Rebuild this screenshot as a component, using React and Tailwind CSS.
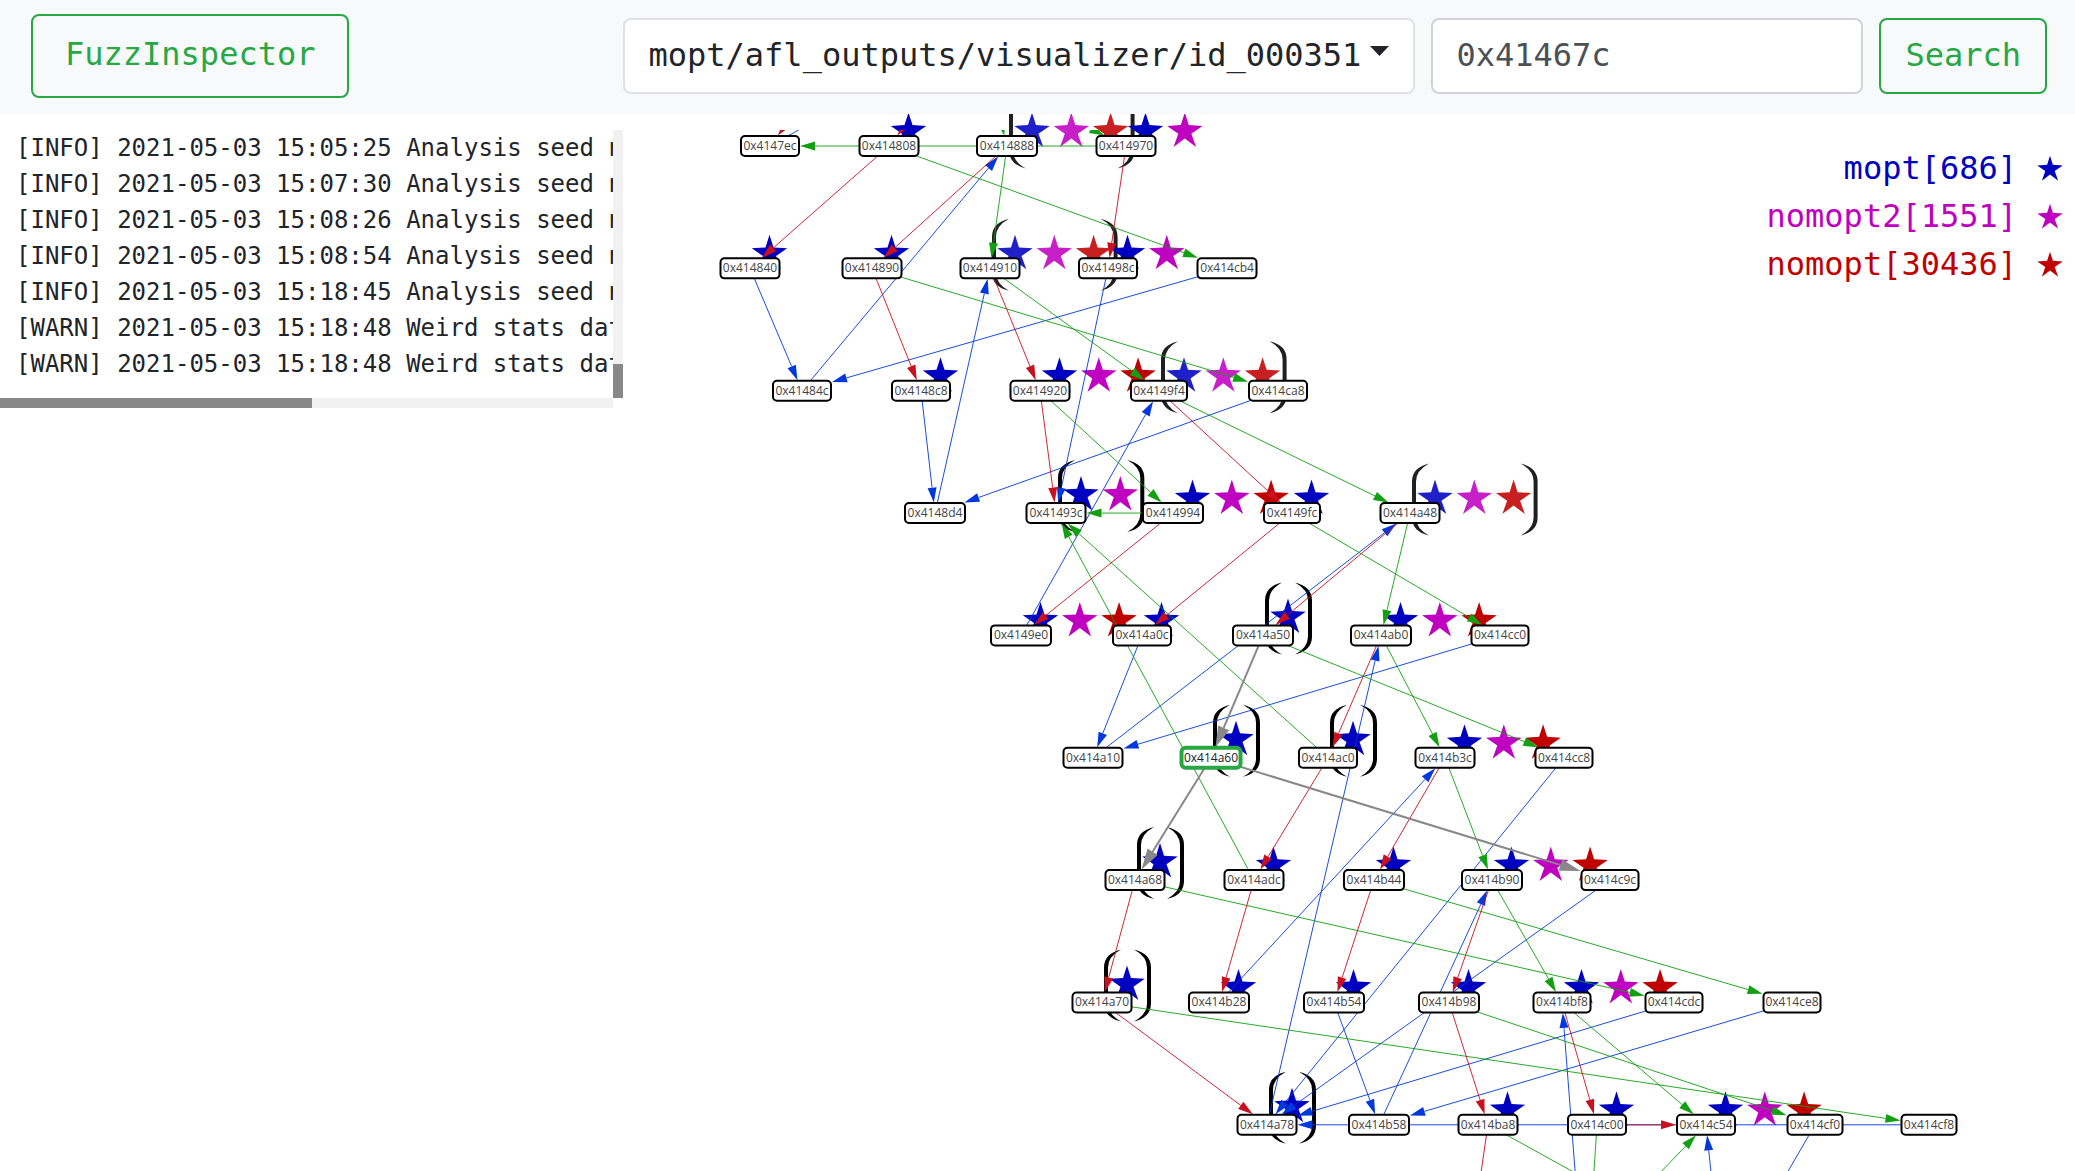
import React from "react";

const BLUE = "#0000c0";
const MAGENTA = "#c000c0";
const RED = "#c00000";
const STAR_COLORS = [BLUE, MAGENTA, RED];

const EDGE_COLORS = { r: "#c8101e", g: "#12a012", b: "#0038dc", k: "#888888" };

const ROW_TOP = 32;
const ROW_PITCH = 122.35;

// id, row, centre x, width, stars, bracket ("solid" | "faint" | none)
const NODES = [
  ["7ec", 0, 770, 60], ["808", 0, 889, 61, 1], ["888", 0, 1007, 62, 3, "faint"], ["970", 0, 1126, 61, 2],
  ["840", 1, 750, 61, 1], ["890", 1, 872, 61, 1], ["910", 1, 990, 61, 3, "faint"], ["98c", 1, 1108, 60, 2], ["cb4", 1, 1227, 61],
  ["84c", 2, 802, 60], ["8c8", 2, 921, 60, 1], ["920", 2, 1040, 61, 3], ["9f4", 2, 1159, 58, 3, "faint"], ["ca8", 2, 1278, 60],
  ["8d4", 3, 935, 62], ["93c", 3, 1056, 61, 2, "solid"], ["994", 3, 1173, 62, 3], ["9fc", 3, 1292, 58, 1], ["a48", 3, 1410, 61, 3, "faint"],
  ["9e0", 4, 1021, 62, 3], ["a0c", 4, 1142, 60, 1], ["a50", 4, 1263, 62, 1, "solid"], ["ab0", 4, 1381, 62, 3], ["cc0", 4, 1500, 59],
  ["a10", 5, 1093, 61], ["a60", 5, 1211, 61, 1, "solid"], ["ac0", 5, 1328, 60, 1, "solid"], ["b3c", 5, 1445, 61, 3], ["cc8", 5, 1564, 59],
  ["a68", 6, 1135, 61, 1, "solid"], ["adc", 6, 1254, 61, 1], ["b44", 6, 1374, 62, 1], ["b90", 6, 1492, 62, 3], ["c9c", 6, 1610, 59],
  ["a70", 7, 1102, 61, 1, "solid"], ["b28", 7, 1219, 62, 1], ["b54", 7, 1334, 62, 1], ["b98", 7, 1449, 62, 1], ["bf8", 7, 1562, 59, 3], ["cdc", 7, 1674, 59], ["ce8", 7, 1792, 59],
  ["a78", 8, 1267, 61, 1, "solid"], ["b58", 8, 1379, 62], ["ba8", 8, 1488, 61, 1], ["c00", 8, 1597, 60, 1], ["c54", 8, 1706, 60, 3], ["cf0", 8, 1815, 57], ["cf8", 8, 1929, 57],
].map(([id, row, x, w, stars = 0, bracket]) => ({ id, x, y: ROW_TOP + row * ROW_PITCH, w, stars, bracket }));

// Neighbours that lie above or below the visible part of the graph.
const OUTSIDE = [
  ["t1", -1, 862], ["t2", -1, 988], ["t3", -1, 986], ["t4", -1, 976], ["t5", -1, 874],
  ["u1", 9, 1589], ["u2", 9, 1470], ["u3", 9, 1710], ["u4", 9, 1581], ["u5", 9, 1719], ["u6", 9, 1744],
].map(([id, row, x]) => ({ id, x, y: ROW_TOP + row * ROW_PITCH, w: 60 }));

const BY_ID = Object.fromEntries([...NODES, ...OUTSIDE].map((n) => [n.id, n]));

const EDGES = `
b 84c 888|b 840 84c|b cb4 84c|b 8c8 8d4|b 8d4 910|b ca8 8d4|b 98c 93c|b 9e0 9f4|b a10 a48|b a0c a10|b cc0 a10
b a78 ab0|b b28 b3c|b cc8 a78|b c9c a78|b cdc a78|b b54 b58|b b58 b90|b ce8 b58|b cf8 a78|b 7ec t2|b u4 bf8|b u5 c54|b cf0 u6
g 970 7ec|g 808 cb4|g 888 910|g 890 ca8|g 910 9f4|g 9f4 a48|g 920 994|g 994 93c|g a48 ab0|g 9fc cc0|g ac0 93c|g adc 93c
g ab0 b3c|g b3c b90|g b90 bf8|g a50 cc8|g a68 cdc|g b44 ce8|g a70 cf8|g b98 cf0|g bf8 c54|g u1 c54|g ba8 u3|g c00 u1|g t4 888|g t5 970
r 808 840|r 888 890|r 970 98c|r 890 8c8|r 910 920|r 920 93c|r 9f4 9fc|r 994 9e0|r 9fc a0c|r a48 a50|r ab0 ac0|r ac0 adc|r b3c b44
r adc b28|r b44 b54|r b90 b98|r a68 a70|r a70 a78|r b98 ba8|r bf8 c00|r c00 c54|r ba8 u2|r t1 7ec|r t3 808
k a50 a60|k a60 a68|k a60 c9c`
  .trim()
  .split(/[|\n]/)
  .map((e) => e.split(" "));

function Edge({ kind, from, to }) {
  const a = BY_ID[from];
  const b = BY_ID[to];
  const dx = b.x - a.x;
  const dy = b.y - a.y;
  const len = Math.hypot(dx, dy);
  const ux = dx / len;
  const uy = dy / len;
  const t = Math.min((b.w / 2) / Math.abs(ux || 1e-6), 10.5 / Math.abs(uy || 1e-6));
  const tx = b.x - ux * t;
  const ty = b.y - uy * t;
  const thick = kind === "k";
  const al = thick ? 21 : 15;
  const aw = thick ? 6 : 4.5;
  const bx = tx - ux * al;
  const by = ty - uy * al;
  const color = EDGE_COLORS[kind];
  return (
    <g fill={color} stroke="none">
      <line x1={a.x} y1={a.y} x2={bx} y2={by} stroke={color} strokeWidth={thick ? 2 : 1} strokeOpacity={thick ? 1 : 0.9} />
      <polygon points={`${tx},${ty} ${bx - uy * aw},${by + ux * aw} ${bx + uy * aw},${by - ux * aw}`} />
    </g>
  );
}

const STAR_PATH = "M0 -18 L4 -5.400 L17.700 -4.600 L6.500 3.200 L11.300 16.500 L0 8 L-11.300 16.500 L-6.500 3.200 L-17.700 -4.600 L-4 -5.400 Z";
const OPEN_BRACKET = "M17 -36 Q0 -32 0 -18 L0 18 Q0 32 17 36 Q4 29 4 18 L4 -18 Q4 -29 17 -36 Z";

function Marks({ node }) {
  const { x, y, stars, bracket } = node;
  const first = x + (bracket ? 25 : 19.5);
  const cy = y - (bracket === "solid" ? 19 : 15.5);
  const last = first + (stars - 1) * 39.3;
  return (
    <g opacity={bracket === "faint" ? 0.87 : 1}>
      {STAR_COLORS.slice(0, stars).map((c, i) => (
        <path key={c} d={STAR_PATH} fill={c} transform={`translate(${first + i * 39.3} ${cy})`} />
      ))}
      {bracket && (
        <>
          <path d={OPEN_BRACKET} transform={`translate(${first - 23} ${cy + 2})`} />
          <path d={OPEN_BRACKET} transform={`translate(${last + 24} ${cy + 2}) scale(-1 1)`} />
        </>
      )}
    </g>
  );
}

function Node({ node }) {
  const active = node.id === "a60";
  return (
    <g>
      <rect
        x={node.x - node.w / 2 + 1}
        y={node.y - 10}
        width={node.w - 2}
        height={20}
        rx={4}
        fill="#fff"
        stroke={active ? "#28a745" : "#000"}
        strokeWidth={active ? 4 : 2}
      />
      <text x={node.x} y={node.y + 4} textAnchor="middle" className="text-[12px]" fill={active ? "#222" : "#444"}>
        {`0x414${node.id}`}
      </text>
    </g>
  );
}

function Graph() {
  return (
    <svg className="absolute inset-0 h-full w-full font-['Open_Sans',sans-serif]" role="img" aria-label="Control flow graph">
      <clipPath id="edge-area">
        <rect x="0" y="16" width="100%" height="100%" />
      </clipPath>
      {NODES.filter((n) => n.stars).map((n) => <Marks key={n.id} node={n} />)}
      <g clipPath="url(#edge-area)">
        {EDGES.map(([k, a, b]) => <Edge key={k + a + b} kind={k} from={a} to={b} />)}
      </g>
      {NODES.map((n) => <Node key={n.id} node={{ ...n, id: n.id }} />)}
    </svg>
  );
}

const LOGS = [
  "[INFO] 2021-05-03 15:05:25 Analysis seed n",
  "[INFO] 2021-05-03 15:07:30 Analysis seed n",
  "[INFO] 2021-05-03 15:08:26 Analysis seed n",
  "[INFO] 2021-05-03 15:08:54 Analysis seed n",
  "[INFO] 2021-05-03 15:18:45 Analysis seed n",
  "[WARN] 2021-05-03 15:18:48 Weird stats dat",
  "[WARN] 2021-05-03 15:18:48 Weird stats dat",
];

function LogPanel() {
  return (
    <section aria-label="Log" className="relative mt-4 grid w-[30%] grid-cols-[minmax(0,1fr)_10px] grid-rows-[1fr_10px] bg-white">
      <div className="overflow-x-auto pb-4 pl-4 text-2xl leading-9 whitespace-pre text-[#212529] [scrollbar-width:none]">
        {LOGS.map((line, i) => <div key={i}>{line}</div>)}
      </div>
      <div className="flex flex-col justify-end bg-[#f1f1f1]">
        <div className="h-[34px] bg-[#888]" />
      </div>
      <div className="bg-[#f1f1f1]">
        <div className="h-full w-[51%] bg-[#888]" />
      </div>
    </section>
  );
}

const LEGEND = [
  ["mopt[686]", "text-[#0000c0]"],
  ["nomopt2[1551]", "text-[#c000c0]"],
  ["nomopt[30436]", "text-[#c00000]"],
];

export default function App() {
  return (
    <div className="flex h-screen flex-col overflow-hidden bg-white font-['DejaVu_Sans_Mono',monospace]">
      <header className="flex shrink-0 items-start bg-[#f8f9fa] pt-[14px] pb-4 text-[32px] leading-[48px]">
        <div className="w-[30%] shrink-0 pl-[31px]">
          <button className="rounded-lg border-2 border-[#28a745] px-8 pt-[14px] pb-[18px] text-[#28a745]">FuzzInspector</button>
        </div>
        <form className="mt-1 flex min-w-0 flex-1 gap-4 pr-7" onSubmit={(e) => e.preventDefault()}>
          <div className="relative w-[792px] shrink-0">
            <select aria-label="Seed" className="h-[76px] w-full appearance-none rounded-lg border-2 border-[#dee2e6] bg-white pb-[3px] pl-6 text-[#212529]">
              <option>mopt/afl_outputs/visualizer/id_000351</option>
            </select>
            <svg className="pointer-events-none absolute top-7 right-[26px] h-[10px] w-[19px]" viewBox="0 0 19 10"><path d="M0 0H19L9.500 10Z" fill="#212529" /></svg>
          </div>
          <input aria-label="Address" defaultValue="0x41467c" className="h-[76px] min-w-0 flex-1 rounded-lg border-2 border-[#ced4da] bg-white px-6 pb-[3px] text-[#495057]" />
          <button className="h-[76px] rounded-lg border-2 border-[#28a745] px-6 pb-[3px] text-[#28a745]">Search</button>
        </form>
      </header>
      <main className="relative flex min-h-0 flex-1 items-start justify-between overflow-hidden">
        <Graph />
        <LogPanel />
        <ul className="relative mt-[30px] pr-3 text-[32px] leading-[48px]">
          {LEGEND.map(([label, color]) => (
            <li key={label} className={`flex items-center justify-end gap-5 ${color}`}>
              {label}
              <svg className="size-[26px]" viewBox="-18 -19 36 36"><path d={STAR_PATH} fill="currentColor" /></svg>
            </li>
          ))}
        </ul>
      </main>
    </div>
  );
}
